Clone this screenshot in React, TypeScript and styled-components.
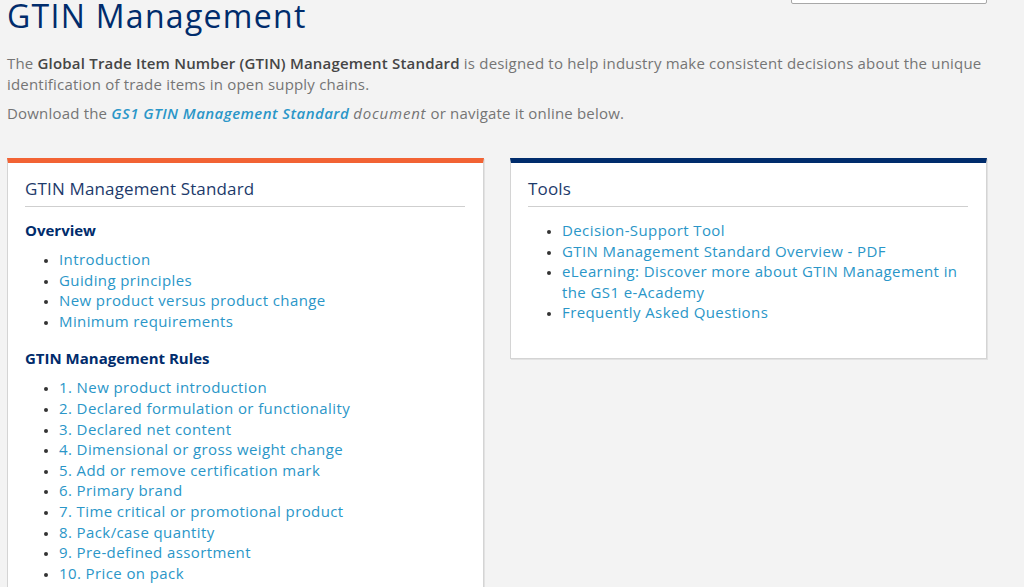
import React from 'react';
import styled, { createGlobalStyle } from 'styled-components';

const GlobalStyle = createGlobalStyle`
  body {
    margin: 0;
    background: #f3f3f3;
    font-family: "Open Sans", "Liberation Sans", sans-serif;
    color: #757575;
  }
`;

const Page = styled.div`
  margin-top: -26px;
  padding: 0 37px 0 7px;
`;

const TopBar = styled.div`
  display: flex;
  justify-content: flex-end;
  height: 30px;
`;

const SearchInput = styled.input`
  width: 196px;
  height: 30px;
  box-sizing: border-box;
  border: 1px solid #a8a8a8;
  border-radius: 2px;
  background: #fff;
  font-family: inherit;
  font-size: 14px;
  padding: 0 16px;
`;

const Title = styled.h1`
  margin: -8px 0 0;
  font-size: 32px;
  line-height: 40px;
  font-weight: 400;
  letter-spacing: 1.3px;
  color: #002c6c;
`;

const Lead = styled.p`
  margin: 17px 0 0;
  font-size: 15px;
  line-height: 21px;
  letter-spacing: 0.19px;
  strong {
    font-weight: 600;
    color: #454545;
  }
`;

const Para = styled.p`
  margin: 8px 0 0;
  font-size: 15px;
  line-height: 21px;
  letter-spacing: 0.19px;
  em {
    font-style: italic;
    letter-spacing: 0.8px;
  }
`;

const DocLink = styled.a`
  color: #2a96c8;
  font-weight: 600;
  font-style: italic;
  letter-spacing: 0.45px;
  text-decoration: none;
`;

const Cards = styled.div`
  display: grid;
  grid-template-columns: 477px 477px;
  column-gap: 26px;
  align-items: start;
  margin-top: 34px;
`;

const Card = styled.section<{ $accent: string; $bottom?: number }>`
  background: #fff;
  border: 1px solid #d4d4d4;
  border-top: 5px solid ${(p) => p.$accent};
  box-shadow: 1px 1px 0 #e2e2e2;
  padding: 14px 18px ${(p) => p.$bottom ?? 24}px 17px;
`;

const CardTitle = styled.h2`
  margin: 0;
  padding-bottom: 5px;
  border-bottom: 1px solid #cfcfcf;
  font-size: 17px;
  line-height: 24px;
  font-weight: 400;
  letter-spacing: 0.15px;
  color: #1d3a6b;
`;

const GroupTitle = styled.h3<{ $top?: number }>`
  margin: ${(p) => p.$top ?? 13}px 0 0;
  font-size: 15px;
  line-height: 21px;
  font-weight: 700;
  color: #002c6c;
`;

const LinkList = styled.ul<{ $gap?: number }>`
  margin: ${(p) => p.$gap ?? 8}px 0 0;
  padding-left: 34px;
  list-style: disc;
  color: #333;
  li {
    font-size: 15px;
    line-height: 20.6px;
  }
  li::marker {
    font-size: 12px;
  }
`;

const Item = styled.a`
  color: #2a96c8;
  font-weight: 500;
  letter-spacing: 0.4px;
  text-decoration: none;
`;

const overview = [
  'Introduction',
  'Guiding principles',
  'New product versus product change',
  'Minimum requirements',
];

const rules = [
  '1. New product introduction',
  '2. Declared formulation or functionality',
  '3. Declared net content',
  '4. Dimensional or gross weight change',
  '5. Add or remove certification mark',
  '6. Primary brand',
  '7. Time critical or promotional product',
  '8. Pack/case quantity',
  '9. Pre-defined assortment',
  '10. Price on pack',
  '11. Seasonal',
];

const tools = [
  'Decision-Support Tool',
  'GTIN Management Standard Overview - PDF',
  'eLearning: Discover more about GTIN Management in the GS1 e-Academy',
  'Frequently Asked Questions',
];

export default function App() {
  return (
    <>
      <GlobalStyle />
      <Page>
        <TopBar>
          <SearchInput defaultValue="Search" />
        </TopBar>
        <Title>GTIN Management</Title>
        <Lead>
          The <strong>Global Trade Item Number (GTIN) Management Standard</strong> is designed to help
          industry make consistent decisions about the unique identification of trade items in open
          supply chains.
        </Lead>
        <Para>
          Download the <DocLink href="#">GS1 GTIN Management Standard</DocLink> <em>document</em> or
          navigate it online below.
        </Para>
        <Cards>
          <Card $accent="#f26334">
            <CardTitle>GTIN Management Standard</CardTitle>
            <GroupTitle>Overview</GroupTitle>
            <LinkList>
              {overview.map((t) => (
                <li key={t}>
                  <Item href="#">{t}</Item>
                </li>
              ))}
            </LinkList>
            <GroupTitle $top={17}>GTIN Management Rules</GroupTitle>
            <LinkList>
              {rules.map((t) => (
                <li key={t}>
                  <Item href="#">{t}</Item>
                </li>
              ))}
            </LinkList>
          </Card>
          <Card $accent="#002c6c" $bottom={35}>
            <CardTitle>Tools</CardTitle>
            <LinkList $gap={13}>
              {tools.map((t) => (
                <li key={t}>
                  <Item href="#">{t}</Item>
                </li>
              ))}
            </LinkList>
          </Card>
        </Cards>
      </Page>
    </>
  );
}
